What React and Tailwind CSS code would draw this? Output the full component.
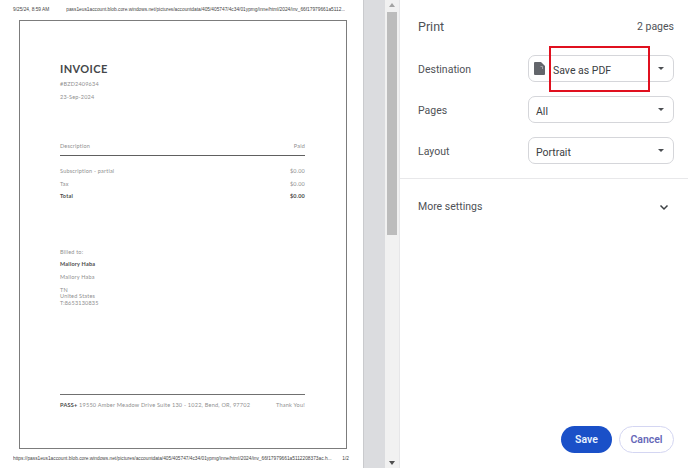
function SelectRow({ label, value, icon }) {
  return (
    <div className="flex items-center h-[27px] mb-[14px]">
      <div className="w-[110px] text-[10.5px] text-[#4f5257] mt-[3px]">{label}</div>
      <div className="flex-1 h-[27px] rounded-[7px] border border-[#d5d6da] flex items-center pl-[7px] pr-[9px] text-[10.5px] text-[#3c4043]">
        {icon && (
          <svg width="11" height="13" viewBox="0 0 11 13" className="-ml-[2px] mr-[8px] -mt-[1px] shrink-0">
            <path d="M1 0h6l4 4v8a1 1 0 0 1-1 1H1a1 1 0 0 1-1-1V1a1 1 0 0 1 1-1z" fill="#63666b" />
            <path d="M6.5 4.5h2v2.5" fill="none" stroke="#c9cacc" strokeWidth="0.6" />
          </svg>
        )}
        <span className="flex-1 mt-[5px]">{value}</span>
        <span className="w-0 h-0 border-x-[3px] border-x-transparent border-t-[3px] border-t-[#4b4e52] -mt-[1px]" />
      </div>
    </div>
  );
}

function InvoicePage() {
  return (
    <div className="w-[328px] h-[430px] ml-[19px] border border-[#7c7c7c] pl-[40px] pr-[41px] pt-[42px] font-['Lato',sans-serif] text-[5.5px] leading-[7px] text-[#8f8f8f] flex flex-col tracking-[0.2px]">
      <div className="text-[11px] leading-[12px] font-bold text-[#45474a] tracking-[0.4px]">INVOICE</div>
      <div className="mt-[6px]">#BZD2409634</div>
      <div className="mt-[6px]">23-Sep-2024</div>

      <div className="mt-[42px] flex justify-between">
        <span>Description</span>
        <span>Paid</span>
      </div>
      <div className="mt-[5px] h-px bg-[#606060]" />
      <div className="mt-[12px] flex justify-between">
        <span>Subscription - partial</span>
        <span>$0.00</span>
      </div>
      <div className="mt-[6px] flex justify-between">
        <span>Tax</span>
        <span>$0.00</span>
      </div>
      <div className="mt-[5px] flex justify-between font-bold text-[#4a4a4a]">
        <span>Total</span>
        <span>$0.00</span>
      </div>

      <div className="mt-[49px]">Billed to:</div>
      <div className="mt-[5px] font-bold text-[#4a4a4a]">Mallory Haba</div>
      <div className="mt-[6px]">Mallory Haba</div>
      <div className="mt-[6px] leading-[6.5px]">
        <div>TN</div>
        <div>United States</div>
        <div>T:8653130835</div>
      </div>

      <div className="mt-[88px] h-px bg-[#707070]" />
      <div className="mt-[6px] flex justify-between text-[5.6px]">
        <span>
          <span className="font-bold text-[#4a4a4a]">PASS+</span> 19550 Amber Meadow Drive Suite 130 - 1022, Bend, OR, 97702
        </span>
        <span>Thank You!</span>
      </div>
    </div>
  );
}

export default function App() {
  return (
    <div className="relative w-[688px] h-[468px] flex overflow-hidden bg-white font-['Roboto',sans-serif]">
      {/* preview page */}
      <div className="w-[363px] shrink-0 flex flex-col font-['Liberation_Sans',sans-serif] text-[4.8px] text-[#444]">
        <div className="h-[20px] pl-[13px] pr-[14px] flex items-center gap-[17px] whitespace-nowrap overflow-hidden">
          <span>9/25/24, 8:59 AM</span>
          <span className="truncate">pass1eus1account.blob.core.windows.net/pictures/accountdata/405/405747/4c34/01ypmg/inne/html/2024/inv_66f17979661a5112...</span>
        </div>
        <InvoicePage />
        <div className="h-[19px] pl-[13px] pr-[14px] flex items-center justify-between whitespace-nowrap">
          <span className="w-[322px] truncate">https://pass1eus1account.blob.core.windows.net/pictures/accountdata/405/405747/4c34/01ypmg/inne/html/2024/inv_66f17979661a5112208373ac.h...</span>
          <span>1/2</span>
        </div>
      </div>

      {/* gray gutter */}
      <div className="w-[22px] shrink-0 bg-[#dbdcdf] border-l border-[#c9cacd]" />

      {/* scrollbar */}
      <div className="w-[14px] shrink-0 bg-[#f1f1f1] flex flex-col items-center">
        <span className="mt-[3px] w-0 h-0 border-x-[3px] border-x-transparent border-b-[4px] border-b-[#a3a3a3]" />
        <div className="mt-[5px] w-[10px] h-[223px] bg-[#bcbcbc]" />
        <span className="mt-auto mb-[3px] w-0 h-0 border-x-[3px] border-x-transparent border-t-[4px] border-t-[#505050]" />
      </div>

      {/* settings */}
      <div className="flex-1 flex flex-col border-l border-[#e6e6e8]">
        <div className="pl-[18px] pr-[14px] pt-[19px]">
          <div className="flex items-center justify-between h-[16px] mb-[20px]">
            <span className="text-[12.5px] text-[#4f5257]">Print</span>
            <span className="text-[10.5px] text-[#4f5257]">2 pages</span>
          </div>
          <SelectRow label="Destination" value="Save as PDF" icon />
          <SelectRow label="Pages" value="All" />
          <SelectRow label="Layout" value="Portrait" />
        </div>
        <div className="h-px bg-[#e8e8ea]" />
        <div className="h-[56px] pl-[18px] pr-[18px] flex items-center justify-between text-[10.5px] text-[#4f5257]">
          <span>More settings</span>
          <svg width="10" height="7" viewBox="0 0 10 7" className="mr-[1px]">
            <path d="M1.5 1.5 5 5l3.5-3.5" fill="none" stroke="#3c4043" strokeWidth="1.5" />
          </svg>
        </div>
        <div className="mt-auto pb-[15px] pr-[14px] flex justify-end gap-[7px] text-[10.5px] font-semibold">
          <button className="w-[51px] h-[27px] rounded-full bg-[#1a50c8] text-[#e9f3ff]">Save</button>
          <button className="w-[55px] h-[27px] rounded-full border border-[#d4d6f2] text-[#6668b8] bg-white">Cancel</button>
        </div>
      </div>

      {/* red annotation */}
      <div className="absolute left-[549px] top-[46px] w-[101px] h-[46px] border-2 border-[#e0101f]" />
    </div>
  );
}
